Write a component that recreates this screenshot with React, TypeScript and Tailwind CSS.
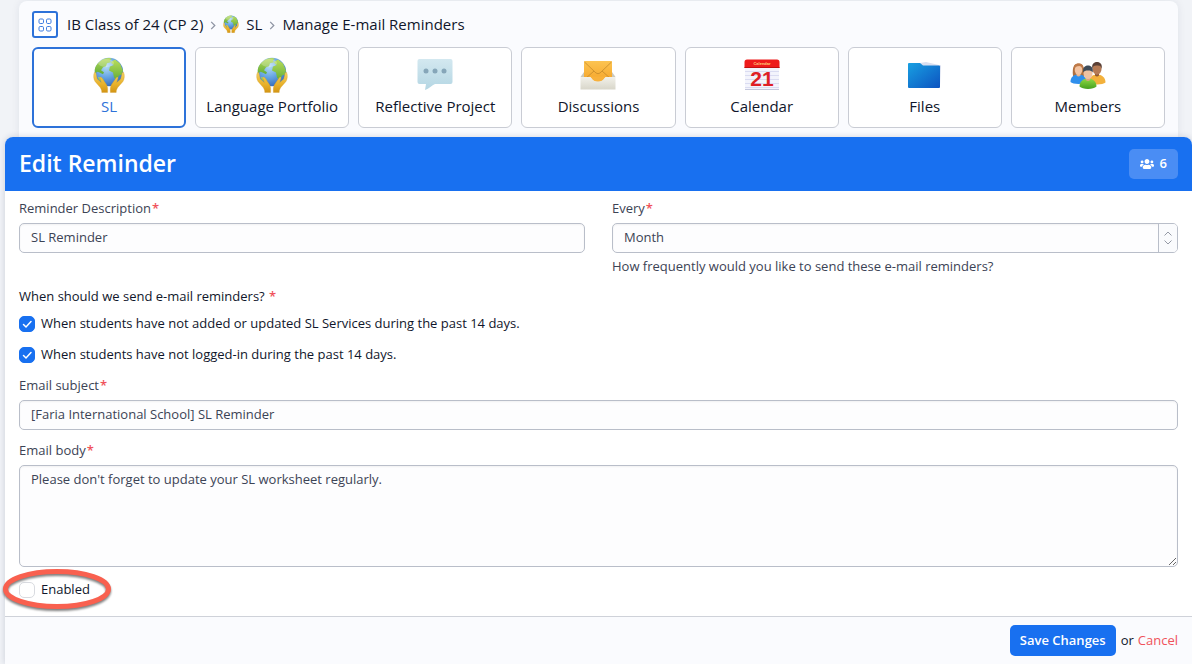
import { useId, useState } from "react";
import type { ComponentProps, ReactNode } from "react";
import { FaUsers } from "react-icons/fa";

const fieldClass =
  "block w-full rounded-[5px] border border-[#b9bec9] bg-[#fdfdfe] px-[11px] text-[13px] font-medium text-[#3c4355] shadow-[inset_0_1px_2px_rgba(0,0,0,0.05)] outline-none";

const GlobeIcon = ({ className }: { className: string }) => {
  const id = useId();

  return (
    <svg viewBox="0 0 32 36" className={className} aria-hidden="true">
      <defs>
        <radialGradient id={`${id}sea`} cx="0.4" cy="0.3" r="0.75">
          <stop offset="0" stopColor="#b5dcf5" />
          <stop offset="0.5" stopColor="#68a6e4" />
          <stop offset="1" stopColor="#3268b8" />
        </radialGradient>
        <linearGradient id={`${id}land`} x1="0" y1="0" x2="0" y2="1">
          <stop offset="0" stopColor="#b9dc5a" />
          <stop offset="1" stopColor="#62ad38" />
        </linearGradient>
        <linearGradient id={`${id}hand`} x1="0" y1="0" x2="0" y2="1">
          <stop offset="0" stopColor="#f3cf62" />
          <stop offset="0.6" stopColor="#e8b12a" />
          <stop offset="1" stopColor="#d29414" />
        </linearGradient>
      </defs>
      <circle cx="16" cy="15" r="14.2" fill={`url(#${id}sea)`} />
      <g fill={`url(#${id}land)`}>
        <path d="M3 9C6 3.500 11 1 16 .9l3 .8-2 1.500 1 2-4 1-1 3-3 1-2 3 3 2-1 2-4-2-2-.5-1.500 2C1.200 14 1.500 12 3 9Z" />
        <path d="m18 5 4-2.500 5 4 3 7-1 4-3 1-2 5-3-3-1-5-4-2 1-4 4-1.500-2-1Z" />
        <path d="m5 20 4 1 2 2-1 3-4-3Z" />
      </g>
      <ellipse cx="13" cy="6" rx="8" ry="4" fill="#fff" opacity="0.25" />
      <g fill={`url(#${id}hand)`} stroke="#cf9a24" strokeWidth="0.3">
        <path d="M1.300 15.500c1-.5 1.600.4 1.800 1.400l1.200 5 4 3.600-1.300-4.300c-.1-1.300 1.100-1.600 1.800-.4l4 5.700c2 2.700 2 4.700 1.800 9H8.800c0-3-1-4.500-3.100-6.800L2 24.400C.5 22 .2 18.500 1.300 15.500Z" />
        <path d="M30.700 15.500c-1-.5-1.600.4-1.800 1.400l-1.200 5-4 3.600 1.300-4.300c.1-1.300-1.100-1.600-1.800-.4l-4 5.700c-2 2.700-2 4.700-1.800 9h5.800c0-3 1-4.500 3.100-6.800l3.700-4.300c1.500-2.400 1.800-5.900.7-8.900Z" />
      </g>
    </svg>
  );
};

const ChatIcon = () => (
  <svg viewBox="0 0 36 32" className="h-8 w-9" aria-hidden="true">
    <defs>
      <linearGradient id="bubble" x1="0" y1="0" x2="0" y2="1">
        <stop offset="0" stopColor="#d3e8f0" />
        <stop offset="1" stopColor="#b4d6e3" />
      </linearGradient>
    </defs>
    <path
      d="M2.500 0h31A2 2 0 0 1 35.500 2v21a2 2 0 0 1-2 2H18c-3 1-6 5-10 6l1-6H2.500a2 2 0 0 1-2-2V2a2 2 0 0 1 2-2Z"
      fill="url(#bubble)"
    />
    <g fill="#86a6b9">
      <circle cx="9" cy="12" r="2.500" />
      <circle cx="18" cy="12" r="2.500" />
      <circle cx="27" cy="12" r="2.500" />
    </g>
  </svg>
);

const MailIcon = () => (
  <svg viewBox="0 0 36 30" className="h-[30px] w-9" aria-hidden="true">
    <defs>
      <linearGradient id="envelope" x1="0" y1="0" x2="0" y2="1">
        <stop offset="0" stopColor="#fcc452" />
        <stop offset="1" stopColor="#f5a52a" />
      </linearGradient>
      <linearGradient id="tray" x1="0" y1="0" x2="0" y2="1">
        <stop offset="0" stopColor="#f2f1ea" />
        <stop offset="1" stopColor="#d8d6ca" />
      </linearGradient>
    </defs>
    <path d="M4 12h28l3.500 5H.500Z" fill="#cbc8bb" />
    <rect x="4" y="1" width="28" height="20" rx="1" fill="url(#envelope)" />
    <path d="m4.500 2 11.500 11q2 1.500 4 0L31.500 2M5 19l9-8m17 8-9-8" fill="none" stroke="#c58a2a" strokeWidth="0.8" />
    <path d="M.5 17h10c1.500 0 1.500 4 7.500 4s6-4 7.500-4h10v12.500H.500Z" fill="url(#tray)" />
    <path d="M10 16.500h16c-1.500 0-2 5-8 5s-6.500-5-8-5Z" fill="#f8b13b" />
  </svg>
);

const CalendarIcon = () => (
  <svg viewBox="0 0 36 32" className="h-8 w-9" aria-hidden="true">
    <path d="M1 7h34v23.500H1Z" fill="#f3f4fc" />
    <path d="M1 12.500h34M1 16.500h34M1 20.500h34M1 24.500h34M1 28.500h34" stroke="#d3d6ee" strokeWidth="0.8" />
    <path d="M3 .5h30a2.500 2.500 0 0 1 2.500 2.500v6H.500V3A2.500 2.500 0 0 1 3 .5Z" fill="#ee1b1b" />
    <path d="M.5 8.500h35" stroke="#c01010" />
    <path d="M1 30.500h34" stroke="#c4c7dc" />
    <text x="18" y="6" textAnchor="middle" className="fill-[#ffd27a] font-['Liberation_Sans'] text-[4px] font-bold">
      Calendar
    </text>
    <text x="18" y="27" textAnchor="middle" className="fill-[#df1f26] font-['Liberation_Sans'] text-[21px] font-bold">
      21
    </text>
  </svg>
);

const FolderIcon = () => (
  <svg viewBox="0 0 34 26" className="h-[26px] w-[34px]" aria-hidden="true">
    <defs>
      <linearGradient id="folder" x1="0" y1="0" x2="1" y2="1">
        <stop offset="0" stopColor="#18a0e2" />
        <stop offset="1" stopColor="#0d53c0" />
      </linearGradient>
    </defs>
    <path d="m12 1 6-1 15 3.500-1 20H14Z" fill="#d9dff0" />
    <path d="M1 1h11l3 2.500h16a1 1 0 0 1 1 1V25a1 1 0 0 1-1 1H1a1 1 0 0 1-1-1V2a1 1 0 0 1 1-1Z" fill="url(#folder)" />
  </svg>
);

const MembersIcon = () => (
  <svg viewBox="0 0 36 27" className="h-[27px] w-9" aria-hidden="true">
    <defs>
      <linearGradient id="shirt-green" x1="0" y1="0" x2="0" y2="1">
        <stop offset="0" stopColor="#8fd944" />
        <stop offset="1" stopColor="#45a01e" />
      </linearGradient>
    </defs>
    <path d="M3 14C2 5 4 1.500 8.500 1.500S15 5 14 14Z" fill="#b0703f" />
    <path d="M.5 20c0-5 3-7.500 8-7.500s8 2.500 8 7.500c-2 2.500-14 2.500-16 0Z" fill="#2f8fec" />
    <path d="M6.500 11h4v2.500q-2 1.800-4 0Z" fill="#e8b48c" />
    <ellipse cx="8.500" cy="8" rx="3.800" ry="4.800" fill="#f3c3a0" />
    <path d="M4.300 8C5 4 7 4.500 9 4c2 0 3.500 1 3.700 4C14 3 12 1.500 8.500 1.500S3 4 4.300 8Z" fill="#bf7a48" />
    <path d="M19 20.500c0-5 3-8 8-8s8.500 3 8.500 8c-2.500 2.500-14 2.500-16.500 0Z" fill="#f3b13c" />
    <path d="M25 11h4v2.500q-2 1.800-4 0Z" fill="#8c5736" />
    <ellipse cx="27" cy="7" rx="4.500" ry="5.800" fill="#b57a54" />
    <path d="M22.300 7c-.8-5 1.500-7 4.700-7s5.500 2 4.700 7C31 4 30 3.500 27 3.500S23 4 22.300 7Z" fill="#5a4036" />
    <path d="M9.500 24.500c0-5 3.500-8 8.500-8s8.500 3 8.500 8c-3 3.300-14 3.300-17 0Z" fill="url(#shirt-green)" />
    <path d="M15.800 15h4.400v3q-2.200 2-4.400 0Z" fill="#dca783" />
    <ellipse cx="18" cy="11.500" rx="4.500" ry="5.500" fill="#eec2a2" />
    <path d="M13.300 10.500c-.8-5 1.500-7 4.700-7s5.500 2 4.700 7c-1-1.500-2-2-4.700-2s-3.700.5-4.700 2Z" fill="#3f4c59" />
  </svg>
);

const tabs = [
  { name: "SL", icon: <GlobeIcon className="h-9 w-8" />, active: true },
  { name: "Language Portfolio", icon: <GlobeIcon className="h-9 w-8" /> },
  { name: "Reflective Project", icon: <ChatIcon /> },
  { name: "Discussions", icon: <MailIcon /> },
  { name: "Calendar", icon: <CalendarIcon /> },
  { name: "Files", icon: <FolderIcon /> },
  { name: "Members", icon: <MembersIcon /> },
];

const Separator = () => (
  <svg viewBox="0 0 6 10" className="mx-[7px] mt-1 h-[9px] w-[6px]" aria-hidden="true">
    <path d="m1 1 4 4-4 4" fill="none" stroke="#8e94a3" strokeWidth="1.400" />
  </svg>
);

const Breadcrumbs = () => (
  <nav aria-label="Breadcrumb" className="flex h-[27px] text-[15px] leading-5 font-medium text-[#10162b]">
    <a
      href="#dashboard"
      aria-label="Dashboard"
      className="mr-[9px] flex h-[27px] w-[26px] items-center justify-center rounded-[3px] border-2 border-[#2d72d9] bg-white"
    >
      <svg viewBox="0 0 14 14" className="size-[14px]" fill="none" stroke="#3b7be0" aria-hidden="true">
        <rect x="1" y="1" width="4.500" height="4.500" rx="1.200" />
        <rect x="8.500" y="1" width="4.500" height="4.500" rx="1.200" />
        <rect x="1" y="8.500" width="4.500" height="4.500" rx="1.200" />
        <rect x="8.500" y="8.500" width="4.500" height="4.500" rx="1.200" />
      </svg>
    </a>
    <div className="flex items-center pb-[2px]">
      <a href="#class">IB Class of 24 (CP 2)</a>
      <Separator />
      <a href="#sl" className="flex items-center gap-[7px]">
        <GlobeIcon className="h-[18px] w-4" />
        SL
      </a>
      <Separator />
      <span>Manage E-mail Reminders</span>
    </div>
  </nav>
);

const Required = () => <span className="ml-px font-semibold text-[#f0525b]">*</span>;

const Label = ({ htmlFor, children }: { htmlFor: string; children: ReactNode }) => (
  <label htmlFor={htmlFor} className="mb-[5px] block text-[#3c4355]">
    {children}
    <Required />
  </label>
);

const Checkbox = ({ children, ...props }: ComponentProps<"input">) => (
  <label className="flex items-center gap-[6px]">
    <span className="mt-[2px] grid size-4">
      <input
        type="checkbox"
        className="peer col-start-1 row-start-1 size-4 appearance-none rounded-[5px] border border-[#d9dbe0] bg-white checked:border-[#1870f0] checked:bg-[#1870f0]"
        {...props}
      />
      <svg
        viewBox="0 0 16 16"
        className="pointer-events-none invisible col-start-1 row-start-1 size-4 peer-checked:visible"
        aria-hidden="true"
      >
        <path d="m4.500 8.500 2.500 2.500 5-5.500" fill="none" stroke="#fff" strokeWidth="1.500" strokeLinecap="round" />
      </svg>
    </span>
    {children}
  </label>
);

const ReminderForm = () => {
  const [enabled, setEnabled] = useState(false);

  return (
    <form onSubmit={(e) => e.preventDefault()} className="text-[13px] leading-5 font-medium text-[#10162b]">
      <div className="px-[14px] pt-[7px] pb-[17px]">
        <div className="grid grid-cols-2 gap-[27px]">
          <div>
            <Label htmlFor="description">Reminder Description</Label>
            <input id="description" defaultValue="SL Reminder" className={`${fieldClass} h-[30px] pb-[2px]`} />
          </div>
          <div>
            <Label htmlFor="every">Every</Label>
            <div className="grid">
              <select id="every" className={`${fieldClass} col-start-1 row-start-1 h-[30px] appearance-none pb-[2px]`}>
                <option>Month</option>
                <option>Week</option>
                <option>Day</option>
              </select>
              <span className="pointer-events-none col-start-1 row-start-1 m-px flex w-[19px] items-center justify-center justify-self-end rounded-r-[4px] border-l border-[#b9bec9] bg-[#fafbfd]">
                <svg viewBox="0 0 8 14" className="h-[14px] w-2" fill="none" stroke="#959aa6" aria-hidden="true">
                  <path d="m.5 4.500 3.500-3.500 3.500 3.500M.5 9.500 4 13l3.500-3.500" />
                </svg>
              </span>
            </div>
            <p className="mt-[3px] text-[#3c4355]">How frequently would you like to send these e-mail reminders?</p>
          </div>
        </div>
        <fieldset className="mt-[10px]">
          <legend>
            When should we send e-mail reminders? <Required />
          </legend>
          <div className="mt-[7px] space-y-[11px]">
            <Checkbox defaultChecked>
              When students have not added or updated SL Services during the past 14 days.
            </Checkbox>
            <Checkbox defaultChecked>When students have not logged-in during the past 14 days.</Checkbox>
          </div>
        </fieldset>
        <div className="mt-[11px]">
          <Label htmlFor="subject">Email subject</Label>
          <input
            id="subject"
            defaultValue="[Faria International School] SL Reminder"
            className={`${fieldClass} h-[30px] pb-[2px]`}
          />
        </div>
        <div className="mt-[10px]">
          <Label htmlFor="body">Email body</Label>
          <textarea
            id="body"
            defaultValue="Please don't forget to update your SL worksheet regularly."
            className={`${fieldClass} h-[102px] resize-y py-[3px]`}
          />
        </div>
        <div className="relative mt-3 w-fit">
          <Checkbox checked={enabled} onChange={(e) => setEnabled(e.target.checked)}>
            Enabled
          </Checkbox>
          <svg
            viewBox="0 0 112 44"
            className="pointer-events-none absolute -top-3 -left-[18px] h-11 w-28 drop-shadow-[0_2px_1px_rgba(0,0,0,0.5)]"
            aria-hidden="true"
          >
            <ellipse cx="56" cy="22" rx="51.500" ry="17.500" fill="none" stroke="#f9604f" strokeWidth="5" />
          </svg>
        </div>
      </div>
      <footer className="flex items-center justify-end border-t border-[#cfd2d9] bg-[#fafbfe] px-[14px] py-2">
        <button type="submit" className="h-[31px] rounded-[5px] bg-[#1870f0] px-[10px] pb-[2px] font-semibold text-white">
          Save Changes
        </button>
        <div className="ml-[5px] flex gap-1 pb-[2px]">
          <span>or</span>
          <a href="#cancel" className="text-[#f0525b]">
            Cancel
          </a>
        </div>
      </footer>
    </form>
  );
};

const App = () => (
  <div className="min-h-screen bg-[#f1f3f7] pt-px font-['Open_Sans',sans-serif]">
    <header className="mr-[14px] ml-[19px] rounded-t-lg bg-[#fafbfe] px-[13px] pt-[10px] pb-[9px] shadow-[0_0_8px_rgba(30,40,80,0.08)]">
      <Breadcrumbs />
      <nav aria-label="Class sections" className="mt-[9px] grid grid-cols-7 gap-[9px]">
        {tabs.map((tab) => (
          <a
            key={tab.name}
            href={`#${tab.name.toLowerCase().replace(" ", "-")}`}
            className={`flex h-[81px] flex-col items-center rounded-md bg-white text-[15px] leading-5 font-medium whitespace-nowrap ${
              tab.active ? "border-2 border-[#2d72d9] pt-2 text-[#2d72d9]" : "border border-[#c9ccd4] pt-[9px] text-[#10162b]"
            }`}
          >
            <span className="mb-[3px] flex h-9 items-center">{tab.icon}</span>
            {tab.name}
          </a>
        ))}
      </nav>
    </header>
    <main className="relative ml-[5px] rounded-t-lg bg-white shadow-[0_0_6px_rgba(30,40,80,0.18)]">
      <div className="flex h-[54px] items-center justify-between rounded-t-lg bg-[#1870f0] px-[14px] text-white">
        <h1 className="pb-[2px] text-[23px] leading-8 font-semibold">Edit Reminder</h1>
        <button
          type="button"
          aria-label="6 recipients"
          className="flex h-[30px] items-center gap-[6px] rounded-[5px] bg-[#4a8df4] px-[11px] text-[13px] font-semibold"
        >
          <FaUsers className="size-[14px]" />6
        </button>
      </div>
      <ReminderForm />
    </main>
  </div>
);

export default App;
